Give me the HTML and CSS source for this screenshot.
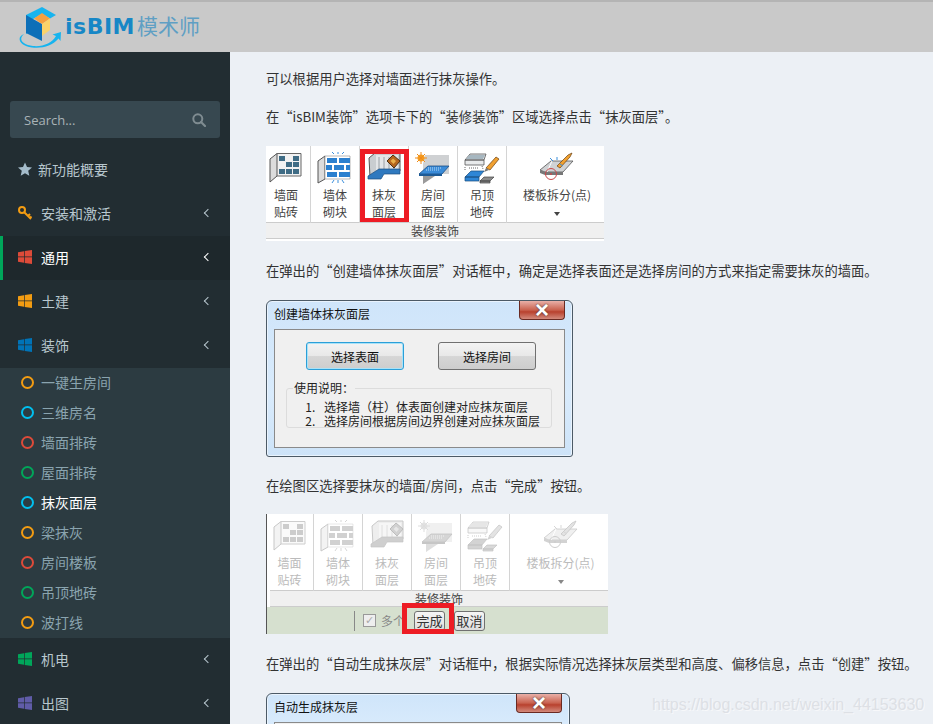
FILE: index.html
```html
<!DOCTYPE html>
<html lang="zh-CN">
<head>
<meta charset="utf-8">
<title>isBIM模术师</title>
<link rel="stylesheet" href="styles.css">
</head>
<body>
<svg class="defs" width="0" height="0">
  <defs>
    <symbol id="win" viewBox="0 0 14 14"><path d="M0 2.2 6 1.200V6.600H0zM6.700 1 14 0V6.600H6.700zM0 7.300H6V12.800L0 11.800zM6.700 7.300H14V14L6.700 13z"/></symbol>
    <symbol id="i-tile" viewBox="0 0 36 32">
      <path d="M2 7 9 1.500H33V24H9L2 30z" fill="#f2f2f2"/><path d="M2 7 9 1.500V24L2 30z" fill="#dcdcdc" stroke="#555" stroke-width="1"/><path d="M9 1.500H33V24H9" fill="none" stroke="#666" stroke-width="1"/>
      <path d="M11 4h6v5h-6zM25 4h6v5h-6zM18 10h6v5h-6zM11 17h6v5h-6zM18 17h6v5h-6zM25 17h6v5h-6zM25 10h6v5h-6z" fill="#3f6c85"/>
    </symbol>
    <symbol id="i-block" viewBox="0 0 36 32">
      <path d="M1 9 8 4V27L1 31z" fill="#dcdcdc" stroke="#555"/><path d="M8 4H33V27H8z" fill="#fff" stroke="#888" stroke-width=".6"/>
      <path d="M10 6h10v5H10zM22 6h11v5H22zM9 13h6v5H9zM17 13h10v5H17zM29 13h4v5h-4zM10 20h10v5H10zM22 20h11v5H22z" fill="#2b80cf"/>
      <path d="M17 2 15 0M21 2V0M25 2l2-2M17 28l-2 3M21 28v3M25 28l2 3" stroke="#3b8fdc" fill="none"/>
    </symbol>
    <symbol id="i-plaster" viewBox="0 0 36 32">
      <path d="M3 6 9 1H34V19L14 19 4 25z" fill="#c9cdd0" stroke="#555"/><path d="M10 3H32V17H15L10 21z" fill="#e3e5e7"/>
      <path d="M13 5v14M18 5v12M23 5v12M28 5v12" stroke="#9aa0a5"/>
      <path d="M2 24 13 17H34V22L18 22 15 27H2z" fill="#2f79bf" stroke="#1d4f80" stroke-width=".7"/>
      <path d="M27 3 34 9 28 16 21 9z" fill="#b5661d" stroke="#4c3010"/><path d="M27 6.500 30 9 27.500 12 24.500 9z" fill="#e8b04a"/>
    </symbol>
    <symbol id="i-room" viewBox="0 0 36 32">
      <path d="M10 3H34V22H20L8 32V12z" fill="#cfd1d3"/><path d="M8 18V32L20 24z" fill="#9a9a9a"/>
      <path d="M13 14H34L27 22H4z" fill="#3a8bd8" stroke="#1c4f86" stroke-width=".8"/><path d="M4 22H27V24H4z" fill="#1c5a96"/>
      <path d="M13 16h14M11 18h14" stroke="#bcdcf5" stroke-dasharray="1 1"/>
      <circle cx="6" cy="6" r="3.500" fill="#f6a623"/><path d="M6 0V12M0 6H12M2 2 10 10M10 2 2 10" stroke="#f08a1a"/>
    </symbol>
    <symbol id="i-ceil" viewBox="0 0 36 32">
      <path d="M1 8 6 2H22L20 8zM1 8H20V13H1z" fill="#e8eaeb" stroke="#555" stroke-width=".8"/><path d="M5 3H21L19 7H2z" fill="#a7b7c0"/>
      <path d="M1 25 7 19H20L15 25zM1 25H15V29H1z" fill="#2e86d6" stroke="#174a7c" stroke-width=".7"/>
      <path d="M16 29 20 25H30L26 29zM16 29H26V31H16z" fill="#8a8a8a" stroke="#444" stroke-width=".7"/>
      <path d="M22 16 32 5 35 7 26 18z" fill="#f0a030" stroke="#6a3f10" stroke-width=".7"/><path d="M22 16 20 20 25 18z" fill="#777"/>
      <path d="M1 15v3M5 16h10M18 14l1 3" stroke="#666" stroke-dasharray="1 1"/>
    </symbol>
    <symbol id="i-split" viewBox="0 0 36 32">
      <path d="M1 18 12 9H34L24 20H6z" fill="#d0d2d4" stroke="#555" stroke-width=".8"/><path d="M6 20H24V23H6zM1 18 6 20V23L1 21z" fill="#777"/>
      <path d="M13 9 8 20" stroke="#fff"/><path d="M18 14 29 3 33 1 31 5 21 16z" fill="#f0a030" stroke="#6a3f10" stroke-width=".7"/>
      <path d="M14 9 11 6M18 8V5M21 12l3 2" stroke="#3b8fdc"/><circle cx="12" cy="22" r="5.500" fill="none" stroke="#c9484a" stroke-width="1"/><circle cx="12" cy="22" r="1" fill="#c9484a"/>
    </symbol>
  </defs>
</svg>

<div class="app">
  <header class="topbar">
    <svg class="logo-mark" width="44" height="42" viewBox="0 0 44 42">
      <path d="M7 9 23 1 37 9 31 12.500 23 8 14 13V24L7 28z" fill="#17b4ef"/>
      <path d="M7 9 14 13 23 18V35L7 27z" fill="#0d6fb8"/>
      <path d="M23 7 31 12.500 23 18 15 12.500z" fill="#f5a040"/>
      <path d="M23 18 31 12.500V24L23 30z" fill="#fbd36a"/>
      <path d="M5 28C-1 33 3 39 14 40 24 41 33 37 37 30L33.500 28.500 42 26 41.500 35 39.500 32.500C33 40 24 42.500 13 41.500 0 40-3 31 5 28z" fill="#17b4ef"/>
    </svg>
    <span class="logo-en">isBIM</span><span class="logo-cn">模术师</span>
  </header>

  <aside class="sidebar">
    <form class="search">
      <span class="search-text">Search...</span>
      <svg width="14" height="14" viewBox="0 0 14 14"><circle cx="5.800" cy="5.800" r="4.500" fill="none" stroke="#7f8c91" stroke-width="2"/><path d="M9 9 13 13" stroke="#7f8c91" stroke-width="2.200" stroke-linecap="round"/></svg>
    </form>
    <nav>
      <a class="item"><svg class="ic-star" width="14" height="14" viewBox="0 0 14 14"><path d="M7 .5 9 5l5 .5-3.800 3.300L11.300 13.700 7 11.200 2.700 13.700 3.800 8.800 0 5.500 5 5z" fill="#a5bccb"/></svg><span>新功能概要</span></a>
      <a class="item"><svg class="ic" width="14" height="14" viewBox="0 0 14 14"><circle cx="4" cy="4" r="3" fill="none" stroke="#f39c12" stroke-width="2"/><path d="M6 6 13 13M10 10 12 8M12 12 13.500 10.500" stroke="#f39c12" stroke-width="2" fill="none"/></svg><span>安装和激活</span><i class="chev"></i></a>
      <a class="item active"><svg class="ic win-red" width="14" height="14"><use href="#win"/></svg><span>通用</span><i class="chev"></i></a>
      <a class="item"><svg class="ic win-orange" width="14" height="14"><use href="#win"/></svg><span>土建</span><i class="chev"></i></a>
      <a class="item"><svg class="ic win-blue" width="14" height="14"><use href="#win"/></svg><span>装饰</span><i class="chev"></i></a>
      <ul class="sub">
        <li><i class="ring r-orange"></i>一键生房间</li>
        <li><i class="ring r-blue"></i>三维房名</li>
        <li><i class="ring r-red"></i>墙面排砖</li>
        <li><i class="ring r-green"></i>屋面排砖</li>
        <li class="on"><i class="ring r-blue"></i>抹灰面层</li>
        <li><i class="ring r-orange"></i>梁抹灰</li>
        <li><i class="ring r-red"></i>房间楼板</li>
        <li><i class="ring r-green"></i>吊顶地砖</li>
        <li><i class="ring r-orange"></i>波打线</li>
      </ul>
      <a class="item"><svg class="ic win-green" width="14" height="14"><use href="#win"/></svg><span>机电</span><i class="chev"></i></a>
      <a class="item"><svg class="ic win-purple" width="14" height="14"><use href="#win"/></svg><span>出图</span><i class="chev"></i></a>
    </nav>
  </aside>

  <main class="content">
    <p>可以根据用户选择对墙面进行抹灰操作。</p>
    <p>在“isBIM装饰”选项卡下的“装修装饰”区域选择点击“抹灰面层”。</p>

    <div class="ribbon">
      <div class="rb-row">
        <div class="rb-btn first"><svg width="36" height="32"><use href="#i-tile"/></svg><span>墙面<br>贴砖</span></div>
        <div class="rb-btn"><svg width="36" height="32"><use href="#i-block"/></svg><span>墙体<br>砌块</span></div>
        <div class="rb-btn hi"><svg width="36" height="32"><use href="#i-plaster"/></svg><span>抹灰<br>面层</span></div>
        <div class="rb-btn"><svg width="36" height="32"><use href="#i-room"/></svg><span>房间<br>面层</span></div>
        <div class="rb-btn"><svg width="36" height="32"><use href="#i-ceil"/></svg><span>吊顶<br>地砖</span></div>
        <div class="rb-btn wide"><svg width="36" height="32"><use href="#i-split"/></svg><span>楼板拆分(点)<br><b class="caret"></b></span></div>
      </div>
      <div class="rb-label">装修装饰</div>
    </div>

    <p class="after-shot">在弹出的“创建墙体抹灰面层”对话框中，确定是选择表面还是选择房间的方式来指定需要抹灰的墙面。</p>

    <div class="dialog">
      <div class="dlg-title"><span>创建墙体抹灰面层</span><b class="dlg-close">×</b></div>
      <div class="dlg-panel">
        <div class="dlg-btns"><button class="focus" type="button">选择表面</button><button type="button">选择房间</button></div>
        <fieldset>
          <legend>使用说明：</legend>
          <ol><li>选择墙（柱）体表面创建对应抹灰面层</li><li>选择房间根据房间边界创建对应抹灰面层</li></ol>
        </fieldset>
      </div>
    </div>

    <p class="after-shot">在绘图区选择要抹灰的墙面/房间，点击“完成”按钮。</p>

    <div class="ribbon off">
      <div class="rb-row">
        <div class="rb-btn first"><svg width="36" height="32"><use href="#i-tile"/></svg><span>墙面<br>贴砖</span></div>
        <div class="rb-btn"><svg width="36" height="32"><use href="#i-block"/></svg><span>墙体<br>砌块</span></div>
        <div class="rb-btn"><svg width="36" height="32"><use href="#i-plaster"/></svg><span>抹灰<br>面层</span></div>
        <div class="rb-btn"><svg width="36" height="32"><use href="#i-room"/></svg><span>房间<br>面层</span></div>
        <div class="rb-btn"><svg width="36" height="32"><use href="#i-ceil"/></svg><span>吊顶<br>地砖</span></div>
        <div class="rb-btn wide"><svg width="36" height="32"><use href="#i-split"/></svg><span>楼板拆分(点)<br><b class="caret"></b></span></div>
      </div>
      <div class="rb-label">装修装饰</div>
      <div class="opt-bar">
        <i class="opt-sep"></i>
        <i class="opt-check">✓</i><span class="opt-text">多个</span>
        <span class="opt-done">完成</span><span class="opt-cancel">取消</span>
      </div>
    </div>

    <p class="after-shot">在弹出的“自动生成抹灰层”对话框中，根据实际情况选择抹灰层类型和高度、偏移信息，点击“创建”按钮。</p>

    <div class="dialog short">
      <div class="dlg-title"><span>自动生成抹灰层</span><b class="dlg-close">×</b></div>
      <div class="dlg-panel"></div>
    </div>

    <div class="watermark">https://blog.csdn.net/weixin_44153630</div>
  </main>
</div>
</body>
</html>
```

FILE: styles.css
```css
* { box-sizing: border-box; }
html, body { margin: 0; height: 724px; overflow: hidden; }
body { font-family: "Noto Sans CJK SC", "Liberation Sans", sans-serif; background: #ecf0f5; }
.defs { position: absolute; }

.app { display: grid; grid-template-columns: 230px 1fr; grid-template-rows: 52px 672px; height: 724px; }

/* top bar */
.topbar { grid-column: 1 / 3; display: flex; align-items: center; padding: 0 0 0 19px; background: #c9c9c9; border-top: 2px solid #b4b4b4; }
.logo-mark { flex: none; margin-right: 2px; }
.logo-en { font: bold 22px "DejaVu Sans", sans-serif; letter-spacing: .5px; color: #1787c6; margin: -2px 2px 0 0; }
.logo-cn { font-size: 21px; color: #5f9fc4; margin-top: -5px; }

/* sidebar */
.sidebar { background: #222d32; overflow: hidden; padding-top: 49px; }
.search { display: flex; align-items: center; justify-content: space-between; height: 37px; margin: 0 10px 10px; padding: 0 14px; background: #374850; border-radius: 3px; }
.search-text { font: 13px "Open Sans", sans-serif; color: #a9b3b7; }
.item { display: flex; align-items: center; height: 44px; padding: 0 19px 2px 18px; font-size: 14px; color: #b8c7ce; }
.item.active { background: #1e282c; color: #fff; border-left: 3px solid #00a65a; padding-left: 15px; }
.ic { flex: none; margin-right: 9px; }
.ic-star { flex: none; margin-right: 6px; }
.win-red { fill: #dd4b39; }
.win-orange { fill: #f39c12; }
.win-blue { fill: #0073b7; }
.win-green { fill: #00a65a; }
.win-purple { fill: #605ca8; }
.chev { width: 6px; height: 6px; margin-left: auto; border-left: 1.500px solid currentColor; border-bottom: 1.500px solid currentColor; transform: rotate(45deg); }
.sub { list-style: none; margin: 0; padding: 0 0 0 1px; background: #2c3b41; }
.sub li { display: flex; align-items: center; height: 30px; padding: 0 0 2px 20px; font-size: 14px; color: #8aa4af; }
.sub li.on { color: #fff; }
.ring { width: 13px; height: 13px; margin-right: 7px; border: 2.500px solid; border-radius: 50%; flex: none; }
.r-orange { color: #f39c12; }
.r-blue { color: #00c0ef; }
.r-red { color: #dd4b39; }
.r-green { color: #00a65a; }

/* content */
.content { position: relative; padding: 17px 0 0 36px; overflow: hidden; }
.content p { margin: 0 0 18px; font-size: 13.300px; line-height: 20px; color: #333; white-space: nowrap; }
.content p.after-shot { margin: 20px 0 19px; }
.content .dialog + p.after-shot { margin-top: 19px; }

/* ribbon picture */
.ribbon { width: 338px; margin-top: 19px; background: #fff; padding-bottom: 2px; }
.rb-row { display: flex; height: 77px; }
.rb-btn { position: relative; width: 49px; display: flex; flex-direction: column; align-items: center; padding-top: 6px; border-right: 1px solid #d4d4d4; font-size: 12px; line-height: 17px; color: #444; }
.rb-btn svg { flex: none; margin-bottom: 2px; }
.rb-btn span { text-align: center; white-space: nowrap; }
.rb-btn.first { width: 45px; padding-right: 4px; }
.rb-btn.wide { flex: 1; border-right: 0; padding-left: 3px; }
.rb-btn.hi::after { content: ""; position: absolute; left: 0; right: -1px; top: 3px; bottom: 1px; border: 5px solid #ed1c24; border-bottom-width: 4px; }
.caret { display: inline-block; width: 0; height: 0; border: 3px solid transparent; border-top: 4px solid #444; border-bottom: 0; vertical-align: middle; }
.rb-label { height: 17px; margin-top: -1px; background: #f0f0f0; border-top: 1px solid #ccc; border-bottom: 1px solid #ccc; font-size: 12px; line-height: 15px; text-align: center; color: #444; }

.ribbon.off { width: 342px; margin-top: -1px; padding-bottom: 0; border-left: 1px solid #555; }
.off .rb-btn { color: #bbb; }
.off .rb-btn svg { opacity: .32; filter: grayscale(1); }
.off .rb-btn.first { width: 47px; padding-right: 1px; }
.off .rb-label { margin-left: 3px; }
.off .caret { border-top-color: #888; }
.opt-bar { position: relative; display: flex; align-items: center; height: 27px; padding-left: 87px; background: #d6e0cf; font-size: 13px; color: #333; }
.opt-sep { width: 1px; height: 20px; background: #888; margin-right: 8px; }
.opt-check { width: 13px; height: 13px; margin-right: 5px; border: 1px solid #999; background: #eee; color: #aaa; font: 11px/11px "DejaVu Sans", sans-serif; text-align: center; }
.opt-text { color: #888; width: 33px; font-size: 12px; }
.opt-done, .opt-cancel { height: 20px; width: 31px; text-align: center; line-height: 18px; border: 1px solid #707070; border-radius: 3px; background: linear-gradient(#f5f5f5, #ddd); }
.opt-done { margin-right: 9px; }
.opt-done::after { content: ""; box-sizing: border-box; position: absolute; left: 135px; top: -4px; width: 52px; height: 31px; border: 5px solid #ed1c24; }

/* dialogs */
.dialog { width: 307px; height: 157px; padding: 0 7px; background: linear-gradient(#cfe5fa, #d9ebfc 60%, #cde3f8); border: 1px solid #4c5a66; border-radius: 6px 6px 3px 3px; box-shadow: inset 0 0 0 1px #e9f3fd; }
.dlg-title { display: flex; justify-content: space-between; height: 28px; font-size: 12px; color: #111; }
.dlg-title span { padding-top: 4px; line-height: 17px; }
.dlg-close { width: 46px; height: 19px; border: 1px solid #6a2a22; border-top: 0; border-radius: 0 0 4px 4px; background: linear-gradient(#e9b0a8, #c9624f 50%, #b8412e 60%, #d38a7c); color: #fff; font: bold 24px/17px "Liberation Sans", sans-serif; text-align: center; text-shadow: 0 0 2px #333; }
.dlg-panel { height: 119px; padding-top: 12px; background: #f0f0f0; border: 1px solid #8a8a8a; }
.dlg-btns { display: flex; gap: 34px; padding-left: 31px; }
.dlg-btns button { width: 98px; height: 28px; padding: 0; font: 12px "Noto Sans CJK SC", sans-serif; color: #111; border: 1px solid #707070; border-radius: 3px; background: linear-gradient(#f3f3f3, #e8e8e8 50%, #d6d6d6 52%, #cdcdcd); }
.dlg-btns button.focus { border-color: #2b9fd8; box-shadow: inset 0 0 0 1px #a8e2f8; }
fieldset { width: 266px; height: 47px; margin: 11px 0 0 11px; padding: 0 0 0 6px; border: 1px solid #dcdcdc; border-radius: 3px; font-size: 12px; color: #222; }
legend { padding: 0 1px; line-height: 14px; }
ol { margin: 5px 0 0; padding: 0 0 0 25px; line-height: 14px; }
ol li { white-space: nowrap; padding-left: 6px; }
.dialog.short { width: 304px; height: 60px; border-radius: 6px 6px 0 0; }
.dialog.short .dlg-panel { height: 40px; }

.watermark { position: absolute; left: 422px; top: 644px; font: 16px "Liberation Sans", sans-serif; color: #dde0e5; text-shadow: 1px 1px 0 #f7f8fa; white-space: nowrap; }
```
